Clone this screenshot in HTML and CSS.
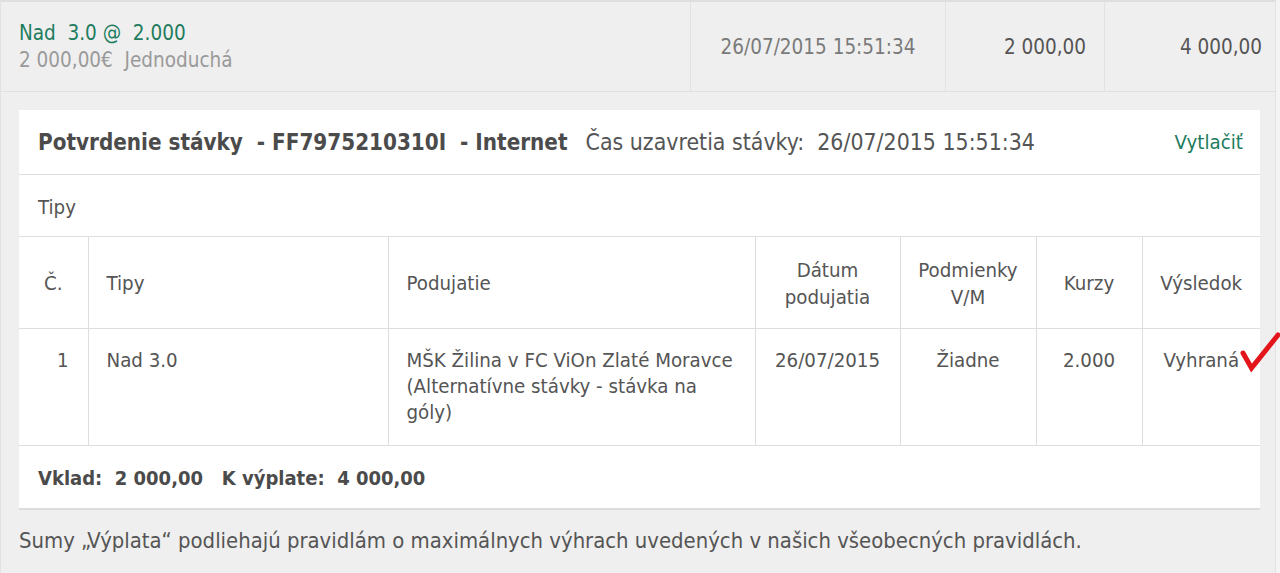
FILE: index.html
```html
<!DOCTYPE html>
<html lang="sk">
<head>
<meta charset="utf-8">
<title>Potvrdenie stávky</title>
<link rel="stylesheet" href="styles.css">
</head>
<body>
<div class="wrap">
  <div class="summary">
    <div class="cell cell-main">
      <div class="sel">Nad&nbsp; 3.0 @&nbsp; 2.000</div>
      <div class="sub">2 000,00€&nbsp; Jednoduchá</div>
    </div>
    <div class="cell cell-date">26/07/2015 15:51:34</div>
    <div class="cell cell-num">2 000,00</div>
    <div class="cell cell-num last">4 000,00</div>
  </div>
  <div class="detail">
    <div class="card">
      <div class="card-head">
        <div class="title"><b>Potvrdenie stávky&nbsp; - FF7975210310I&nbsp; - Internet</b><span class="closed">Čas uzavretia stávky:&nbsp; 26/07/2015 15:51:34</span></div>
        <a class="print" href="#">Vytlačiť</a>
      </div>
      <div class="section">Tipy</div>
      <table class="tips">
        <colgroup>
          <col class="c1"><col class="c2"><col class="c3"><col class="c4"><col class="c5"><col class="c6"><col class="c7">
        </colgroup>
        <thead>
          <tr>
            <th class="ctr">Č.</th>
            <th class="lft">Tipy</th>
            <th class="lft">Podujatie</th>
            <th class="ctr">Dátum<br>podujatia</th>
            <th class="ctr">Podmienky<br>V/M</th>
            <th class="ctr">Kurzy</th>
            <th class="ctr">Výsledok</th>
          </tr>
        </thead>
        <tbody>
          <tr>
            <td class="rgt">1</td>
            <td class="lft">Nad 3.0</td>
            <td class="lft">MŠK Žilina v FC ViOn Zlaté Moravce (Alternatívne stávky - stávka na góly)</td>
            <td class="ctr">26/07/2015</td>
            <td class="ctr">Žiadne</td>
            <td class="ctr">2.000</td>
            <td class="ctr"><span class="result">Vyhraná<svg class="check" viewBox="0 0 42 42" width="42" height="42"><path d="M4 21 L12.5 36 L39 3" fill="none" stroke="#e3151b" stroke-width="5" stroke-linejoin="miter" stroke-linecap="round"/></svg></span></td>
          </tr>
        </tbody>
      </table>
      <div class="card-foot"><b>Vklad:&nbsp; 2 000,00 &nbsp; K výplate:&nbsp; 4 000,00</b></div>
    </div>
    <p class="note">Sumy „Výplata“ podliehajú pravidlám o maximálnych výhrach uvedených v našich všeobecných pravidlách.</p>
  </div>
</div>
</body>
</html>
```
FILE: styles.css
```css
html, body {
  margin: 0;
  padding: 0;
}
body {
  background: #f4f4f4;
  font-family: "DejaVu Sans Condensed", "DejaVu Sans", sans-serif;
  color: #555;
  font-size: 20.3px;
  line-height: 26px;
}
.wrap {
  width: 1276px;
  height: 573px;
  box-sizing: border-box;
  background: #efefef;
  border-top: 2px solid #dedede;
  border-left: 1px solid #e2e2e2;
  border-right: 1px solid #e2e2e2;
  overflow: visible;
}
.summary {
  display: grid;
  grid-template-columns: 689px 255px 159px 1fr;
  height: 89px;
  border-bottom: 1px solid #e0e0e0;
  font-size: 20.5px;
}
.cell {
  display: flex;
  align-items: center;
  border-left: 1px solid #e2e2e2;
}
.cell-main {
  border-left: none;
  flex-direction: column;
  align-items: flex-start;
  justify-content: center;
  padding-left: 18px;
}
.sel {
  color: #217c5e;
}
.sub {
  color: #9a9a9a;
  margin-top: 1px;
}
.cell-date {
  justify-content: center;
  color: #7a7a7a;
}
.cell-num {
  justify-content: flex-end;
  padding-right: 18px;
  color: #555;
}
.cell-num.last {
  padding-right: 13px;
}
.detail {
  padding: 18px 15px 0 18px;
}
.card {
  background: #fff;
  box-shadow: 0 2px 0 #dcdcdc;
}
.card-head {
  display: flex;
  align-items: center;
  justify-content: space-between;
  height: 64px;
  padding: 0 17px 0 19px;
  border-bottom: 1px solid #dedede;
}
.title {
  font-size: 22.5px;
  color: #555;
}
.title b {
  color: #4b4b4b;
  font-size: 22.25px;
}
.closed {
  margin-left: 18px;
  font-size: 22.9px;
}
.print {
  color: #217c5e;
  text-decoration: none;
  font-size: 20.3px;
}
.section {
  height: 62px;
  display: flex;
  align-items: center;
  padding-left: 19px;
  padding-top: 2px;
  box-sizing: border-box;
  border-bottom: 1px solid #dedede;
}
.tips {
  width: 100%;
  border-collapse: collapse;
  table-layout: fixed;
}
.c1 { width: 69px; }
.c2 { width: 300px; }
.c3 { width: 367px; }
.c4 { width: 145px; }
.c5 { width: 136px; }
.c6 { width: 106px; }
.c7 { width: 118px; }
.tips th {
  font-weight: normal;
  height: 89px;
  padding: 2px 6px 0;
  vertical-align: middle;
  border-left: 1px solid #dedede;
  border-bottom: 1px solid #dedede;
  line-height: 27px;
}
.tips td {
  vertical-align: top;
  padding: 18px 6px 0 18px;
  height: 98px;
  border-left: 1px solid #dedede;
  border-bottom: 1px solid #dedede;
}
.tips th:first-child, .tips td:first-child {
  border-left: none;
}
.tips .lft { text-align: left; padding-left: 18px; padding-right: 16px; }
.tips .ctr { text-align: center; padding-left: 4px; padding-right: 4px; }
.tips .rgt { text-align: right; padding-right: 19px; }
.result {
  position: relative;
  display: inline-block;
}
.check {
  position: absolute;
  left: 100%;
  top: -15px;
  margin-left: 0;
}
.card-foot {
  height: 62px;
  display: flex;
  align-items: center;
  padding-left: 19px;
  padding-top: 2px;
  box-sizing: border-box;
  color: #4b4b4b;
  font-size: 20px;
}
.note {
  margin: 20px 0 0 0;
  font-size: 21.9px;
  color: #555;
}
```
